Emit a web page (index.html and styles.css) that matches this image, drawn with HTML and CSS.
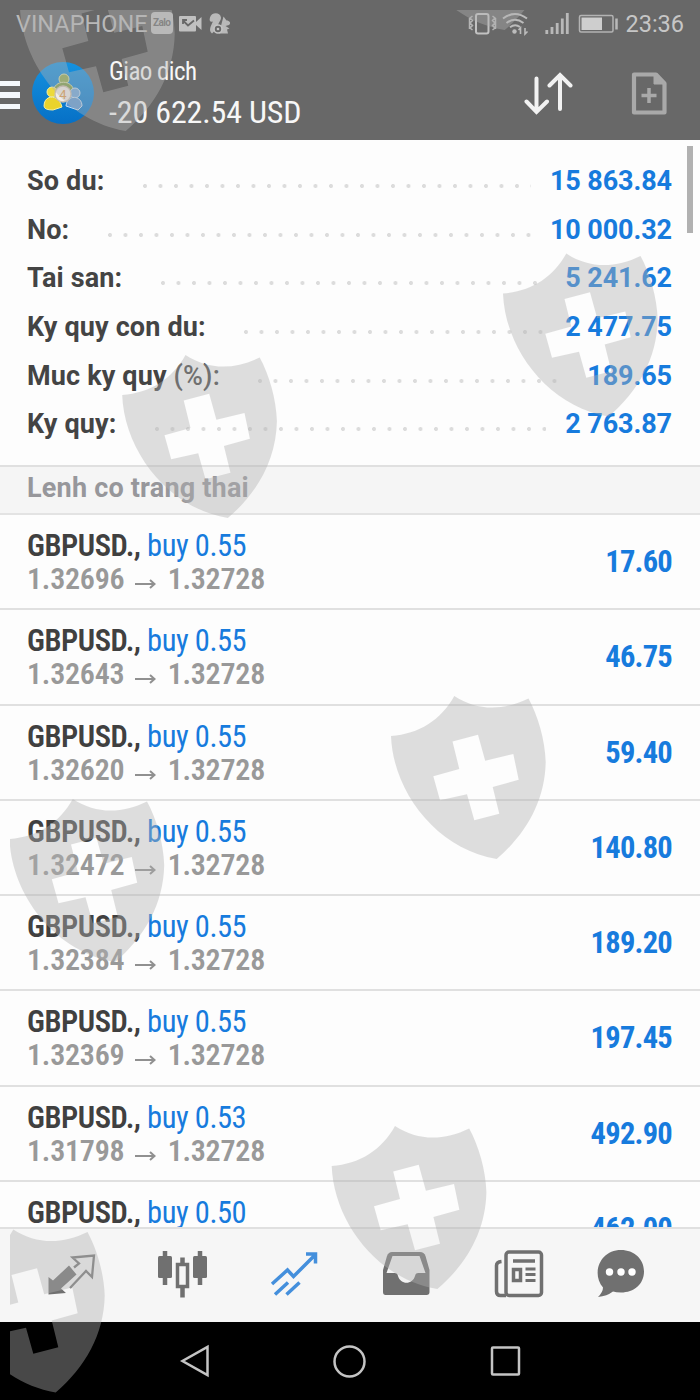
FILE: index.html
```html
<!DOCTYPE html>
<html lang="vi">
<head>
  <meta charset="UTF-8">
  <title>Giao dich</title>
  <link rel="stylesheet" href="styles.css">
</head>
<body>
  <div class="screen">
    <div class="top">
      <div class="status-bar">
        <span class="carrier">VINAPHONE</span>
        <svg class="status-left" width="82" height="28" viewBox="150 10 82 28">
          <rect x="151" y="12" width="22" height="22" rx="4" fill="#c0c0c0"/>
          <text x="153" y="26" class="zalo" textLength="18">Zalo</text>
          <rect x="179" y="16" width="17" height="15.500" rx="1" fill="#c0c0c0"/>
          <path d="M196 22l5.500-5v13l-5.500-5z" fill="#c0c0c0"/>
          <path d="M183 20.500l5 5 6-5M183 24v-4h4" fill="none" stroke="#686868" stroke-width="1.800"/>
          <path d="M212 33.500c-4-3-1-8 1-12-3 1-4-1-3-4 1-5 10-6 11 0 0 4-4 6-3 10M222 22l1.500-5.500 3 4c3 0 5 2.500 2.500 4.500l-3.500 1 4 2.500-2.500 1 1 4h-9z" fill="#b9b9b9"/>
          <circle cx="218" cy="29" r="4" fill="#686868" stroke="#c4c4c4" stroke-width="1.600"/>
          <circle cx="218" cy="29" r="1.300" fill="#c4c4c4"/>
        </svg>
        <svg class="status-right" width="156" height="28" viewBox="468 10 156 28">
          <rect x="478" y="14" width="12.500" height="19.500" rx="2" fill="none" stroke="#c2c2c2" stroke-width="2"/>
          <path d="M474.500 16l-2.500 2 2.500 2.500-2.500 2.500 2.500 2.500-2.500 2.500 2.500 2M471.500 18v11M494.500 16l2.500 2-2.500 2.500 2.500 2.500-2.500 2.500 2.500 2.500-2.500 2M497.500 18v11" fill="none" stroke="#b4b4b4" stroke-width="1.500"/>
          <path d="M505 18.500q12-9 24 0M508.500 23q8.500-6.500 17 0M512 27.300q5-4 10-.3" fill="none" stroke="#bcbcbc" stroke-width="2"/>
          <circle cx="516.500" cy="31.500" r="2.200" fill="#bcbcbc"/>
          <path d="M522.500 34v-6l-2 2M527 28v6l2.500-2.500" fill="none" stroke="#bcbcbc" stroke-width="1.600"/>
          <path d="M548.800 30v4M554 27v7M559.200 23v11M564.300 18.500v15.500M569.300 13v21" stroke="#b9b9b9" stroke-width="2.800"/>
          <rect x="581.500" y="15.500" width="33.500" height="16.500" rx="1.500" fill="none" stroke="#b3b3b3" stroke-width="1.500"/>
          <rect x="583.500" y="17.500" width="20.500" height="12.500" fill="#cecece"/>
          <path d="M618.500 18.500v11" stroke="#b9b9b9" stroke-width="2.500"/>
        </svg>
        <span class="clock">23:36</span>
      </div>
      <div class="toolbar">
        <div class="menu"><i></i><i></i><i></i></div>
        <svg class="logo" width="62" height="66" viewBox="0 0 62 66">
          <defs>
            <linearGradient id="sky" x1="0" y1="0" x2="0" y2="1">
              <stop offset="0" stop-color="#1592e0"/>
              <stop offset="1" stop-color="#0670c6"/>
            </linearGradient>
          </defs>
          <circle cx="31" cy="33" r="31" fill="url(#sky)"/>
          <circle cx="32" cy="19" r="5" fill="#8ea94d" stroke="#d7dea9"/>
          <path d="M21 32c1-13 20-13 21 0z" fill="#7c9c46" stroke="#d3dba8"/>
          <circle cx="20" cy="32" r="5" fill="#edda3b" stroke="#f7f0a0"/>
          <path d="M12 46c0-12 15-12 18 1l-9 3q-9 0-9-4z" fill="#ead32b" stroke="#f8ee9c"/>
          <circle cx="43" cy="33" r="5" fill="#6da6dc" stroke="#c3dcf2"/>
          <path d="M34 46c1-12 16-11 16 0l-4 4z" fill="#5b98d6" stroke="#c3dcf2"/>
          <circle cx="31" cy="34" r="8" fill="#f2ede8" stroke="#cdbfae" stroke-width="1.300"/>
          <text x="31" y="39" class="logo-digit">4</text>
        </svg>
        <div class="titles">
          <div class="title cond">Giao dich</div>
          <div class="total cond">-20 622.54 USD</div>
        </div>
        <svg class="sort" width="50" height="44" viewBox="523 71 50 44">
          <path d="M536.500 78.500v32M526.500 101.500l10 10.500 10.500-10.500M560 109v-33M549.500 85.500l10.500-10.500 10.500 10.500" fill="none" stroke="#f2f2f2" stroke-width="4" stroke-linecap="round"/>
        </svg>
        <svg class="new-order" width="36" height="44" viewBox="631 71 36 44">
          <path d="M634 74.500h22l8.500 9v29h-30.500z" fill="none" stroke="#a9a9a9" stroke-width="4.200" stroke-linejoin="round"/>
          <path d="M654 74.500v9.500h10l-8-9z" fill="#a9a9a9" stroke="#a9a9a9"/>
          <path d="M649 88v15M641.500 95.500h15" stroke="#a9a9a9" stroke-width="3.500"/>
        </svg>
      </div>
    </div>

    <div class="account">
      <div class="info"><span class="label">So du:</span><span class="dots"></span><span class="amount">15 863.84</span></div>
      <div class="info"><span class="label">No:</span><span class="dots"></span><span class="amount">10 000.32</span></div>
      <div class="info"><span class="label">Tai san:</span><span class="dots"></span><span class="amount">5 241.62</span></div>
      <div class="info"><span class="label">Ky quy con du:</span><span class="dots"></span><span class="amount">2 477.75</span></div>
      <div class="info"><span class="label">Muc ky quy <span class="thin">(%):</span></span><span class="dots"></span><span class="amount">189.65</span></div>
      <div class="info"><span class="label">Ky quy:</span><span class="dots"></span><span class="amount">2 763.87</span></div>
      <div class="scrollbar"></div>
    </div>

    <div class="section">Lenh co trang thai</div>

    <div class="positions">
      <div class="position">
        <div><div class="symbol cond"><b>GBPUSD.,</b> buy 0.55</div><div class="prices cond">1.32696 <svg class="arrow" width="21" height="10" viewBox="0 0 21 10"><path d="M0 5h19M15 1l4.500 4-4.500 4"/></svg> 1.32728</div></div>
        <div class="profit cond">17.60</div>
      </div>
      <div class="position">
        <div><div class="symbol cond"><b>GBPUSD.,</b> buy 0.55</div><div class="prices cond">1.32643 <svg class="arrow" width="21" height="10" viewBox="0 0 21 10"><path d="M0 5h19M15 1l4.500 4-4.500 4"/></svg> 1.32728</div></div>
        <div class="profit cond">46.75</div>
      </div>
      <div class="position">
        <div><div class="symbol cond"><b>GBPUSD.,</b> buy 0.55</div><div class="prices cond">1.32620 <svg class="arrow" width="21" height="10" viewBox="0 0 21 10"><path d="M0 5h19M15 1l4.500 4-4.500 4"/></svg> 1.32728</div></div>
        <div class="profit cond">59.40</div>
      </div>
      <div class="position">
        <div><div class="symbol cond"><b>GBPUSD.,</b> buy 0.55</div><div class="prices cond">1.32472 <svg class="arrow" width="21" height="10" viewBox="0 0 21 10"><path d="M0 5h19M15 1l4.500 4-4.500 4"/></svg> 1.32728</div></div>
        <div class="profit cond">140.80</div>
      </div>
      <div class="position">
        <div><div class="symbol cond"><b>GBPUSD.,</b> buy 0.55</div><div class="prices cond">1.32384 <svg class="arrow" width="21" height="10" viewBox="0 0 21 10"><path d="M0 5h19M15 1l4.500 4-4.500 4"/></svg> 1.32728</div></div>
        <div class="profit cond">189.20</div>
      </div>
      <div class="position">
        <div><div class="symbol cond"><b>GBPUSD.,</b> buy 0.55</div><div class="prices cond">1.32369 <svg class="arrow" width="21" height="10" viewBox="0 0 21 10"><path d="M0 5h19M15 1l4.500 4-4.500 4"/></svg> 1.32728</div></div>
        <div class="profit cond">197.45</div>
      </div>
      <div class="position">
        <div><div class="symbol cond"><b>GBPUSD.,</b> buy 0.53</div><div class="prices cond">1.31798 <svg class="arrow" width="21" height="10" viewBox="0 0 21 10"><path d="M0 5h19M15 1l4.500 4-4.500 4"/></svg> 1.32728</div></div>
        <div class="profit cond">492.90</div>
      </div>
      <div class="position">
        <div><div class="symbol cond"><b>GBPUSD.,</b> buy 0.50</div></div>
        <div class="profit cond">462.00</div>
      </div>
    </div>

    <div class="tabs">
      <svg width="60" height="52" viewBox="46 1248 60 52">
        <path d="M48.500 1294.500v-17.500l4.500 3.500 16-15 7.500 9-15.500 14 5 4.500z" fill="#707070"/>
        <path d="M74 1267.500l5-4-6.500-6 21.500-2-2 21.500-6-6-16 17" fill="none" stroke="#777" stroke-width="2.300"/>
      </svg>
      <svg width="60" height="52" viewBox="156 1248 60 52">
        <path d="M165 1251v34M200 1251v34M182.500 1257.500v40" stroke="#707070" stroke-width="4.500"/>
        <rect x="158" y="1256" width="14" height="22" rx="1.500" fill="#707070"/>
        <rect x="193" y="1256" width="14" height="22" rx="1.500" fill="#707070"/>
        <rect x="177.500" y="1264.500" width="10" height="22" fill="#f6f6f6" stroke="#707070" stroke-width="3.500"/>
      </svg>
      <svg width="60" height="52" viewBox="266 1248 60 52" fill="none" stroke="#448fdc" stroke-width="3.500">
        <path d="M272 1284l15.500-14 6 6.500 22-22M306 1254h9.500v9.500M275 1294.500l13-12M286.500 1294.500l13-12"/>
      </svg>
      <svg width="60" height="52" viewBox="376 1248 60 52">
        <path d="M392 1252h28q4 0 5.500 4l4 14v22q0 3-3 3h-41q-2.500 0-2.500-3v-22l4-14q1.500-4 5-4z" fill="#707070"/>
        <path d="M392.500 1256h27l6 17h-7c-2.500 0-3 1-3.500 3-2.500 9-14.500 9-17 0-.5-2-1-3-3.500-3h-8z" fill="#f3f3f3"/>
      </svg>
      <svg width="60" height="52" viewBox="486 1248 60 52" fill="none" stroke="#707070" stroke-width="3.500">
        <rect x="506" y="1252" width="35.500" height="43.500" rx="3"/>
        <path d="M506 1295.500h-5.500q-4 0-4-4v-26q0-3.500 5-4M513 1261h22" />
        <rect x="513.500" y="1269.500" width="7" height="11" stroke-width="3.500"/>
        <path d="M525.500 1269h10M525.500 1274.500h10M525.500 1280.500h10" stroke-width="3"/>
      </svg>
      <svg width="60" height="52" viewBox="596 1248 60 52">
        <path d="M621 1250c13 0 23 9 23 21.500s-10 21-23 21q-5 0-8-1-6 4.500-15 5.500 5-5 5-9.500c-12-14-3-37.500 18-37.500z" fill="#707070"/>
        <g fill="#fff"><circle cx="609.500" cy="1272" r="3.700"/><circle cx="621" cy="1272" r="3.700"/><circle cx="632" cy="1272" r="3.700"/></g>
      </svg>
    </div>

    <div class="nav">
      <svg width="34" height="36" viewBox="0 0 34 36"><path d="M29.500 4v28l-25-14z"/></svg>
      <svg width="34" height="36" viewBox="0 0 34 36"><circle cx="16.500" cy="18.500" r="15"/></svg>
      <svg width="34" height="36" viewBox="0 0 34 36"><rect x="3" y="4.500" width="27" height="27" rx="1"/></svg>
    </div>

    <svg class="shields" width="700" height="1400" viewBox="0 0 700 1400">
      <defs>
        <clipPath id="frame"><rect x="10" y="10" width="680" height="1383"/></clipPath>
        <path id="shield" fill-rule="evenodd" d="M0 40C28 38 50 24 63.300 0C86 15 112 15 137.500 2.500C147 20 154 44 154.700 66C154 105 135 138 105.700 163C45 153 2 95 0 40zM61.500 45.500L87 38.700 94.200 64.700 122.300 58 127.700 83.700 101.700 91 108.300 117.700 83.300 124.300 76 98.300 49 104.300 42.300 80.300 68.300 73z"/>
      </defs>
      <g clip-path="url(#frame)">
        <use href="#shield" x="20" y="-32"/>
        <use href="#shield" x="399" y="-133"/>
        <use href="#shield" x="503" y="253.500"/>
        <use href="#shield" x="122.200" y="355"/>
        <use href="#shield" x="391" y="696"/>
        <use href="#shield" x="9.500" y="799"/>
        <use href="#shield" x="331.700" y="1126"/>
        <use href="#shield" x="-50" y="1229.500"/>
      </g>
    </svg>
  </div>
</body>
</html>
```

FILE: styles.css
```css
body {
  margin: 0;
  font-family: Roboto, "Liberation Sans", sans-serif;
}

.screen {
  position: relative;
  width: 700px;
  height: 1400px;
  display: flex;
  flex-direction: column;
  overflow: hidden;
  background-color: #fdfdfd;
}

.cond {
  font-stretch: 75%;
  white-space: pre;
}

.top {
  height: 140px;
  flex: none;
  background-color: #686868;
}

.status-bar {
  display: flex;
  align-items: center;
  height: 48px;
  padding: 0 16px;
  color: #b9b9b9;
  font-size: 23.5px;
}

.carrier {
  width: 131px;
}

.status-left {
  margin-left: 3px;
}

.status-right {
  margin-left: auto;
  margin-right: 3px;
}

.zalo {
  font-size: 10px;
  font-weight: bold;
  fill: #686868;
}

.clock {
  color: #c6c6c6;
}

.toolbar {
  display: flex;
  align-items: center;
  height: 90px;
}

.menu {
  display: flex;
  flex-direction: column;
  gap: 6px;
  width: 20px;
  margin-right: 12px;
  padding-top: 4px;
}

.menu i {
  height: 5.5px;
  background-color: #f5f8fc;
}

.logo-digit {
  font-size: 13px;
  fill: #e09a4a;
  text-anchor: middle;
}

.titles {
  width: 414px;
  margin-left: 15px;
  color: #f7f7f7;
}

.title {
  font-size: 25px;
  line-height: 36px;
  letter-spacing: -0.55px;
}

.total {
  padding-top: 1px;
  font-size: 32px;
  line-height: 42px;
  letter-spacing: -0.15px;
}

.new-order {
  margin-left: 58px;
}

.account {
  position: relative;
  flex: none;
  box-sizing: border-box;
  height: 325px;
  padding: 17px 28px 0 27px;
}

.info {
  display: flex;
  height: 48.7px;
  line-height: 48.7px;
  font-size: 27px;
  font-weight: bold;
  color: #444;
}

.label {
  letter-spacing: 0.15px;
}

.thin {
  font-weight: 500;
}

.dots {
  flex: 1;
  height: 4px;
  margin: 27px 19px 0 38.5px;
  background: radial-gradient(circle at 2px 2px, #dcdcdc 1.7px, transparent 2.3px) 0 0 / 15.5px 4px repeat-x;
}

.amount {
  color: #177bdd;
  letter-spacing: -0.1px;
}

.scrollbar {
  position: absolute;
  top: 6px;
  right: 7px;
  width: 6px;
  height: 87px;
  background-color: #b1b1b1;
}

.section {
  flex: none;
  box-sizing: border-box;
  height: 50px;
  padding-left: 27px;
  border-top: 2px solid #e0e0e0;
  border-bottom: 2px solid #e3e3e3;
  background-color: #f5f5f5;
  color: #97979b;
  font-size: 27px;
  font-weight: bold;
  letter-spacing: 0.2px;
  line-height: 43px;
}

.positions {
  height: 712px;
  overflow: hidden;
}

.position {
  display: flex;
  justify-content: space-between;
  box-sizing: border-box;
  height: 95.25px;
  padding: 13px 28px 0 27px;
  border-bottom: 2px solid #e0e0e0;
}

.symbol {
  font-size: 30.5px;
  line-height: 35px;
  letter-spacing: -0.45px;
  color: #177bdd;
}

.symbol b {
  font-weight: 600;
  color: #404040;
}

.prices {
  font-size: 30px;
  font-weight: 600;
  line-height: 31px;
  letter-spacing: -0.25px;
  color: #999;
}

.arrow {
  margin: 0 4.5px;
  fill: none;
  stroke: #909090;
  stroke-width: 2;
}

.profit {
  padding-top: 16px;
  font-size: 30.5px;
  font-weight: bold;
  line-height: 36px;
  letter-spacing: -0.75px;
  color: #177bdd;
}

.tabs {
  flex: none;
  display: flex;
  box-sizing: border-box;
  height: 95px;
  padding: 19px 0 0 46px;
  gap: 50px;
  border-top: 2px solid #e0e0e0;
  background-color: #f6f6f6;
}

.nav {
  flex: 1;
  display: flex;
  justify-content: center;
  align-items: center;
  gap: 121.5px;
  background-color: #000;
}

.nav svg {
  fill: none;
  stroke: #c4c4c4;
  stroke-width: 2.5;
}

.shields {
  position: absolute;
  top: 0;
  left: 0;
  fill: #b1b1b1;
  opacity: 0.407;
}
```
